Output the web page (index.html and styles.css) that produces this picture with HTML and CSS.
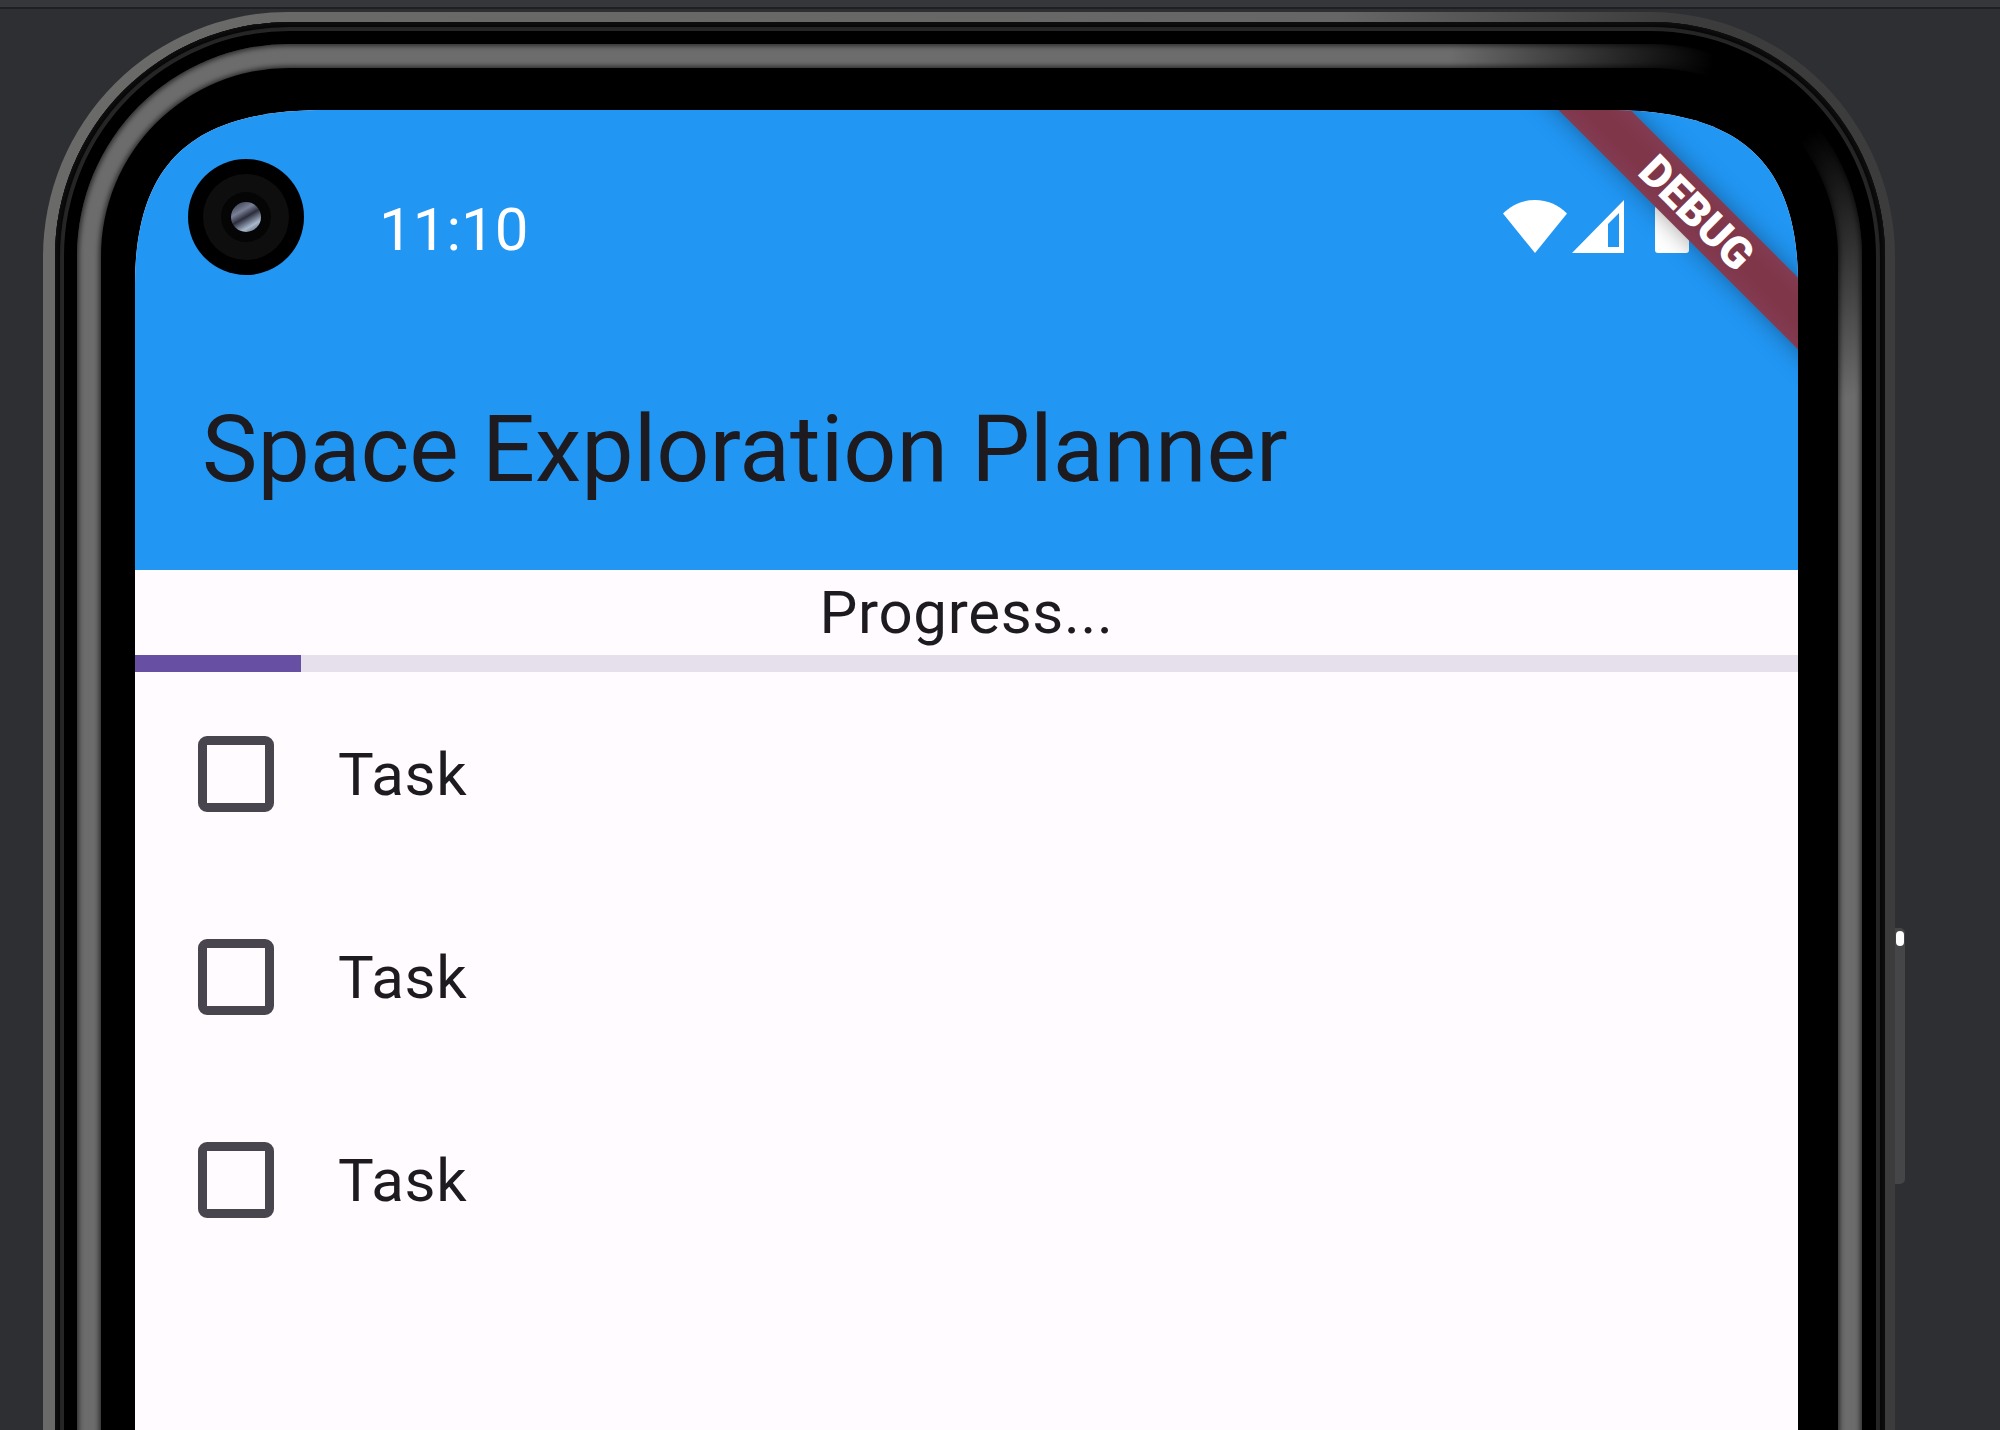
FILE: index.html
```html
<!DOCTYPE html>
<html lang="en">
<head>
  <meta charset="UTF-8">
  <meta name="viewport" content="width=device-width, initial-scale=1.0">
  <title>Space Exploration Planner</title>
  <link rel="stylesheet" href="styles.css">
</head>
<body>
  <div class="toolbar-edge"></div>

  <!-- Emulator frame -->
  <div class="device">
    <div class="side-button"><span class="side-dot"></span></div>
    <div class="rim">
      <div class="rim-inner">
        <div class="band">
          <div class="band-inner">
            <div class="screen">
              <div class="camera"><div class="camera-ring"><div class="camera-core"><div class="camera-lens"></div></div></div></div>

              <div class="debug-banner"><span>DEBUG</span></div>

              <header class="app-bar">
                <div class="status-bar">
                  <span class="clock">11:10</span>
                  <div class="status-icons">
                    <svg class="icon-wifi" width="64" height="53" viewBox="0 0 64 53">
                      <path fill="#fff" d="M0 13.500C8.500 5 19.500 0 32 0s23.500 5 32 13.500L32 53z"/>
                    </svg>
                    <svg class="icon-signal" width="54" height="54" viewBox="0 0 54 54">
                      <path fill="#fff" fill-rule="evenodd" d="M0 53 52 0v53zM36 47h11V13L36 24z"/>
                    </svg>
                    <svg class="icon-battery" width="34" height="50" viewBox="0 0 34 50">
                      <path fill="#fff" d="M9 0h16v2h5a4 4 0 0 1 4 4v41a3 3 0 0 1-3 3H3a3 3 0 0 1-3-3V6a4 4 0 0 1 4-4h5z"/>
                    </svg>
                  </div>
                </div>
                <h1 class="app-title">Space Exploration Planner</h1>
              </header>

              <main class="content">
                <div class="progress-label">Progress...</div>
                <div class="progress-track"><div class="progress-fill" style="width: 10%"></div></div>

                <ul class="task-list">
                  <li class="task"><span class="checkbox"></span><span class="task-name">Task</span></li>
                  <li class="task"><span class="checkbox"></span><span class="task-name">Task</span></li>
                  <li class="task"><span class="checkbox"></span><span class="task-name">Task</span></li>
                </ul>
              </main>
            </div>
          </div>
        </div>
      </div>
    </div>
  </div>
</body>
</html>
```

FILE: styles.css
```css
/* Page */
html, body {
  height: 1430px;
  overflow: hidden;
}
body {
  margin: 0;
  background-color: #2d2f33;
  font-family: Roboto, "Liberation Sans", sans-serif;
}
.toolbar-edge {
  height: 7px;
  background-color: #35373b;
  border-bottom: 2px solid #1f2023;
}

/* Device frame */
.device {
  position: relative;
  width: 1852px;
  height: 1418px;
  margin: 3px 0 0 43px;
}
.rim, .rim-inner, .band, .band-inner, .screen {
  box-sizing: border-box;
  height: 100%;
}
.rim {
  overflow: hidden;
  padding: 10px 10px 0 12px;
  border-radius: 245px 245px 0 0;
  background: linear-gradient(to right, #6a6a68, #666 70%, #3c3c3c 88%);
}
/* runs on past the rim so the inset rings stay open at the bottom */
.rim-inner {
  height: calc(100% + 30px);
  padding: 22px 23px 0 22px;
  border-radius: 234px 234px 0 0;
  background-color: #000;
  box-shadow: inset 0 0 4px 2px #111, inset 0 0 0 5px #070707, inset 0 0 0 9px #262626;
}
.band {
  padding: 24px 24px 0;
  border-radius: 212px 212px 0 0;
  background:
    radial-gradient(circle 340px at calc(100% - 90px) 40px, #000 18%, rgba(0, 0, 0, 0) 95%),
    #6c6c6c;
  box-shadow: inset 0 0 5px 2px rgba(0, 0, 0, 0.6);
}
.band-inner {
  padding: 42px 40px 0 34px;
  border-radius: 188px 188px 0 0;
  background-color: #000;
  box-shadow: 0 0 5px 2px rgba(0, 0, 0, 0.6);
}
.screen {
  position: relative;
  overflow: hidden;
  background-color: #fffbfe;
  clip-path: path("M0 1400V175C0 50 60 0 190 0H1473C1603 0 1663 50 1663 175V1400Z");
}
.side-button {
  position: absolute;
  top: 916px;
  right: -10px;
  width: 10px;
  height: 256px;
  border-radius: 0 5px 5px 0;
  background-color: #454648;
}
.side-dot {
  display: block;
  width: 8px;
  height: 15px;
  margin: 3px 0 0 1px;
  border-radius: 4px;
  background-color: #fff;
}

/* Camera cutout */
.camera {
  position: absolute;
  top: 49px;
  left: 53px;
  display: flex;
  align-items: center;
  justify-content: center;
  width: 116px;
  height: 116px;
  border-radius: 50%;
  background-color: #000;
}
.camera-ring {
  display: flex;
  align-items: center;
  justify-content: center;
  width: 86px;
  height: 86px;
  border-radius: 50%;
  background-color: #0e0e0e;
}
.camera-core {
  display: flex;
  align-items: center;
  justify-content: center;
  width: 50px;
  height: 50px;
  border-radius: 50%;
  background-color: #050505;
}
.camera-lens {
  width: 30px;
  height: 30px;
  border-radius: 50%;
  background: linear-gradient(150deg, #35384a 5%, #7a8096 32%, #2b2d3c 50%, #a9b8cc 75%, #444a5a);
  filter: blur(0.7px);
}

/* Debug ribbon */
.debug-banner {
  position: absolute;
  top: 77px;
  left: 1262px;
  display: flex;
  align-items: center;
  justify-content: center;
  width: 600px;
  height: 51px;
  transform: rotate(45deg);
  background: linear-gradient(to bottom, #833b52, #7f3649 35%, #7f3649 65%, #833b52);
  box-shadow: 0 0 24px rgba(0, 0, 0, 0.35);
  color: #fff;
  font-size: 44px;
  font-weight: 900;
}

/* App bar */
.app-bar {
  height: 460px;
  background-color: #2196f3;
}
.status-bar {
  display: flex;
  justify-content: space-between;
  box-sizing: border-box;
  height: 182px;
  padding: 84px 109px 0 244px;
}
.clock {
  color: #fff;
  font-size: 60px;
}
.status-icons {
  display: flex;
  align-items: flex-start;
  gap: 5px;
  margin-top: 6px;
}
.icon-battery {
  margin: 3px 0 0 24px;
}
.app-title {
  margin: 0;
  padding: 102px 0 0 67px;
  color: #1d1b20;
  font-size: 93.300px;
  font-weight: 400;
}

/* Content */
.progress-label {
  height: 85px;
  color: #1d1b20;
  font-size: 60px;
  line-height: 85px;
  letter-spacing: 0.700px;
  text-align: center;
}
.progress-track {
  height: 17px;
  background-color: #e5e0ec;
}
.progress-fill {
  height: 100%;
  background-color: #6750a4;
}
.task-list {
  margin: 0;
  padding: 0;
  list-style: none;
}
.task {
  display: flex;
  align-items: center;
  height: 203px;
  padding-left: 63px;
}
.checkbox {
  box-sizing: border-box;
  width: 76px;
  height: 76px;
  border: 9px solid #49454f;
  border-radius: 9px;
}
.task-name {
  margin: 2px 0 0 64px;
  color: #1d1b20;
  font-size: 60px;
  letter-spacing: 0.700px;
}
```
